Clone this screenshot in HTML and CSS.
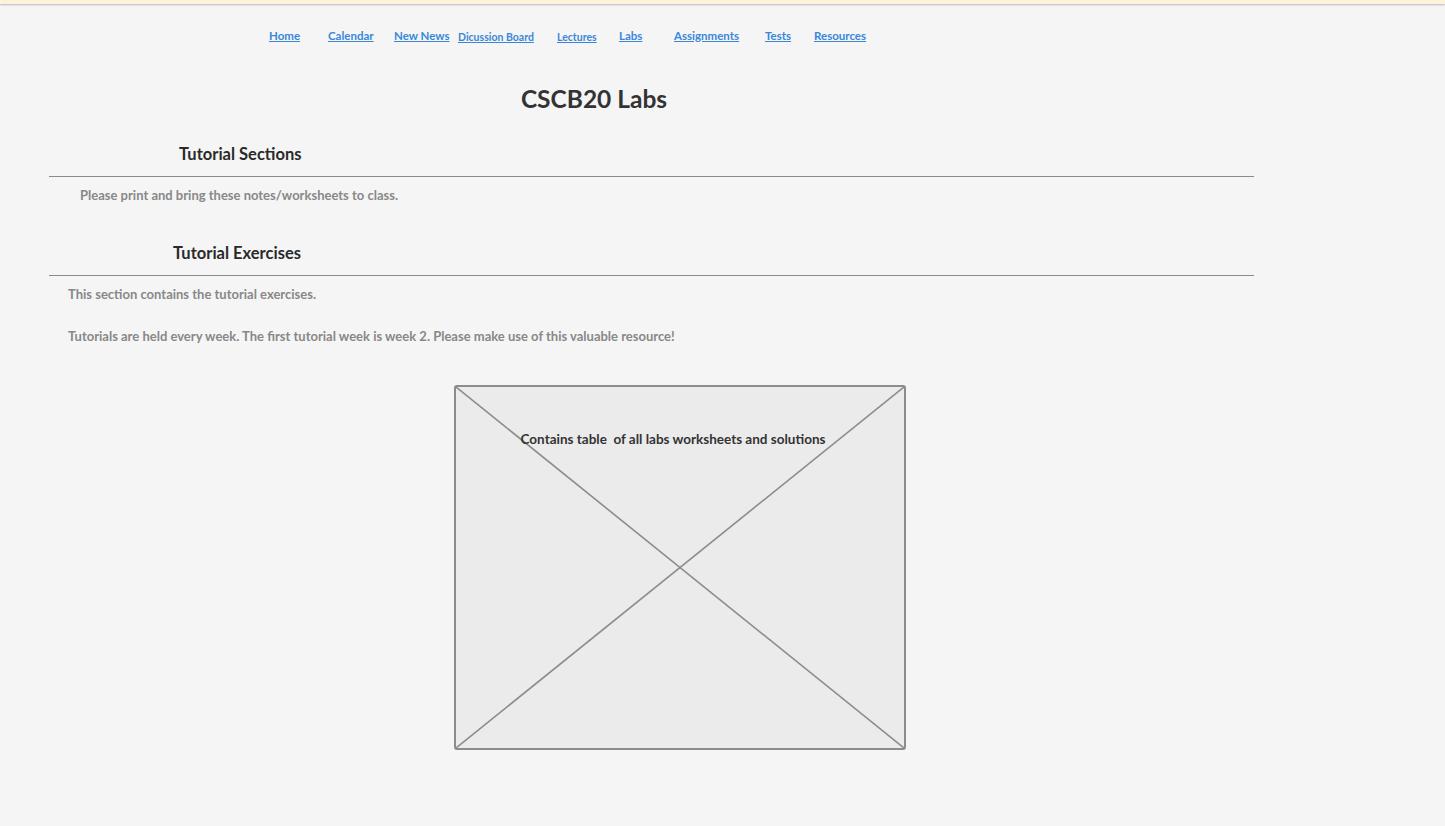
FILE: index.html
```html
<!DOCTYPE html>
<html>
<head>
<meta charset="utf-8">
<link rel="stylesheet" href="styles.css">
</head>
<body>
<div class="topbar"></div>
<nav class="nav">
  <a href="#" class="nl">Home</a>
  <a href="#" class="nl">Calendar</a>
  <a href="#" class="nl">New News</a>
  <a href="#" class="nl small">Dicussion Board</a>
  <a href="#" class="nl small">Lectures</a>
  <a href="#" class="nl">Labs</a>
  <a href="#" class="nl">Assignments</a>
  <a href="#" class="nl">Tests</a>
  <a href="#" class="nl">Resources</a>
</nav>
<h1 class="title">CSCB20 Labs</h1>
<section class="sec">
  <h2 class="sec-h h-sections">Tutorial Sections</h2>
  <div class="rule"></div>
  <p class="txt p-sections">Please print and bring these notes/worksheets to class.</p>
</section>
<section class="sec sec2">
  <h2 class="sec-h h-exercises">Tutorial Exercises</h2>
  <div class="rule"></div>
  <p class="txt p-ex1">This section contains the tutorial exercises.</p>
  <p class="txt p-ex2">Tutorials are held every week. The first tutorial week is week 2. Please make use of this valuable resource!</p>
</section>
<div class="ph-wrap">
  <div class="placeholder">
    <svg class="xlines" viewBox="0 0 448 361" preserveAspectRatio="none">
      <line x1="0" y1="0" x2="448" y2="361" />
      <line x1="448" y1="0" x2="0" y2="361" />
    </svg>
    <div class="ph-label">Contains table&nbsp; of all labs worksheets and solutions</div>
  </div>
</div>
</body>
</html>
```
FILE: styles.css
```css
html, body {
  margin: 0;
  padding: 0;
  background: #f5f5f5;
  font-family: Lato, "Open Sans", sans-serif;
  color: #333;
}
body {
  width: 1445px;
  height: 826px;
  overflow: hidden;
}
.topbar {
  height: 4px;
  background: #fdf3d8;
  box-shadow: 0 1px 2px rgba(0,0,0,0.25);
}
.nav {
  display: grid;
  grid-template-columns: 59px 66px 64px 99px 62px 55px 91px 49px auto;
  padding-left: 269px;
  margin-top: 21px;
  height: 20px;
  align-items: center;
}
.nl {
  color: #3a87d9;
  font-weight: 700;
  font-size: 11.5px;
  text-decoration: underline;
  white-space: nowrap;
}
.nl.small {
  font-size: 10.5px;
  margin-top: 3px;
}
.title {
  margin: 0;
  margin-top: 39px;
  text-align: center;
  padding-right: 257px;
  font-size: 24.5px;
  font-weight: 700;
  line-height: 30px;
  color: #333;
}
.sec {
  width: 1205px;
  margin-left: 49px;
}
.sec-h {
  margin: 0;
  font-size: 16.5px;
  font-weight: 700;
  line-height: 20px;
  color: #2a2a2a;
}
.h-sections {
  margin-top: 30px;
  padding-left: 130px;
}
.h-exercises {
  padding-left: 124px;
}
.sec2 {
  margin-top: 40px;
}
.rule {
  height: 1px;
  background: #8a8a8a;
  margin-top: 12px;
}
.txt {
  margin: 0;
  font-size: 13px;
  font-weight: 700;
  color: #888;
  line-height: 16px;
}
.p-sections {
  margin-top: 10px;
  padding-left: 31px;
}
.p-ex1 {
  margin-top: 10px;
  padding-left: 19px;
}
.p-ex2 {
  margin-top: 26px;
  padding-left: 19px;
}
.ph-wrap {
  margin-top: 41px;
  padding-left: 454px;
}
.placeholder {
  position: relative;
  width: 448px;
  height: 361px;
  background: #ebebeb;
  border: 2px solid #8c8c8c;
  border-radius: 3px;
}
.xlines {
  position: absolute;
  inset: 0;
  width: 100%;
  height: 100%;
}
.xlines line {
  stroke: #8c8c8c;
  stroke-width: 1.6;
  vector-effect: non-scaling-stroke;
}
.ph-label {
  position: relative;
  text-align: center;
  margin-top: 44px;
  padding-right: 14px;
  font-size: 13.5px;
  font-weight: 700;
  color: #333;
  white-space: pre;
}
```
